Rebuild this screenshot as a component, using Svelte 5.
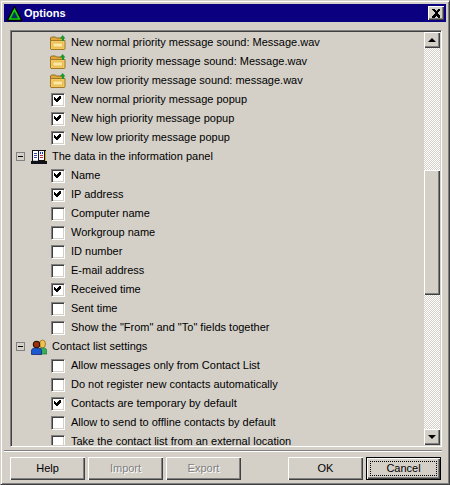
<script>
  const r1 = [
    { t: 'folder', l: 'New normal priority message sound: Message.wav' },
    { t: 'folder', l: 'New high priority message sound: Message.wav' },
    { t: 'folder', l: 'New low priority message sound: message.wav' },
    { t: 'on', l: 'New normal priority message popup' },
    { t: 'on', l: 'New high priority message popup' },
    { t: 'on', l: 'New low priority message popup' },
    { t: 'group', i: 'book', l: 'The data in the information panel' },
    { t: 'on', l: 'Name' },
    { t: 'on', l: 'IP address' },
    { t: 'off', l: 'Computer name' },
    { t: 'off', l: 'Workgroup name' },
    { t: 'off', l: 'ID number' },
    { t: 'off', l: 'E-mail address' },
    { t: 'on', l: 'Received time' },
    { t: 'off', l: 'Sent time' },
    { t: 'off', l: 'Show the "From" and "To" fields together' },
    { t: 'group', i: 'people', l: 'Contact list settings' },
    { t: 'off', l: 'Allow messages only from Contact List' },
    { t: 'off', l: 'Do not register new contacts automatically' },
    { t: 'on', l: 'Contacts are temporary by default' },
    { t: 'off', l: 'Allow to send to offline contacts by default' },
    { t: 'off', l: 'Take the contact list from an external location' }
  ];
</script>

<div class="win">
  <div class="title">
    <svg class="logo" width="17" height="17" viewBox="0 0 17 17">
      <path d="M8.500 1.500 L15.800 15.500 H1.200 Z" fill="#10d010" stroke="#000" stroke-width="1.300" stroke-linejoin="round" />
      <path d="M8.500 7 L11.500 13 H5.500 Z" fill="#082878" stroke="#064020" stroke-width=".6" />
    </svg>
    <span>Options</span>
    <div class="close">
      <svg width="10" height="9" viewBox="0 0 10 9" shape-rendering="crispEdges">
        <path d="M1 0h2l2 2 2-2h2v1L6 4l3 3v2H7L5 7 3 9H1V7l3-3-3-3z" fill="#000" />
      </svg>
    </div>
  </div>

  <div class="body">
    <div class="frame">
      <div class="tree">
        {#each r1 as r}
          {#if r.t === 'group'}
            <div class="row group">
              <span class="tog"><i></i></span>
              {#if r.i === 'book'}
                <svg class="gi" width="16" height="16" viewBox="0 0 16 16" shape-rendering="crispEdges">
                  <path d="M0 12h16v3H0z" fill="#101018" />
                  <path d="M1 1h14v12H1z" fill="#101018" />
                  <path d="M2 2h5v9H2z" fill="#fff" />
                  <path d="M2 11h5v1H2z" fill="#c8c8c8" />
                  <path d="M8 2h5v9H8z" fill="#f4f4ff" />
                  <path d="M3 4h3v1H3zM3 6h3v1H3zM3 8h3v1H3z" fill="#3848a8" />
                  <path d="M9 3h1v2H9zM11 3h1v2h-1z" fill="#1030c0" />
                  <path d="M9 6h3v1H9zM9 8h3v1H9z" fill="#c03030" />
                  <path d="M14 2h1v10h-1z" fill="#d8b000" />
                </svg>
              {:else}
                <svg class="gi" width="16" height="16" viewBox="0 0 16 16">
                  <ellipse cx="11.500" cy="5" rx="3" ry="4" fill="#f0c050" stroke="#907018" stroke-width=".8" />
                  <path d="M7 15v-3q0-3 4.500-3t4.500 3v3z" fill="#38b058" stroke="#106030" stroke-width=".6" />
                  <circle cx="5.500" cy="5.500" r="3.200" fill="#a03008" stroke="#201000" stroke-width="1.100" />
                  <path d="M0.500 15.500v-4q0-2.500 5-2.500t5 2.500v4z" fill="#1c58d0" stroke="#0a1860" stroke-width=".7" />
                </svg>
              {/if}
              <span class="lab">{r.l}</span>
            </div>
          {:else}
            <div class="row child">
              {#if r.t === 'folder'}
                <svg class="ic" width="16" height="15" viewBox="0 0 16 15">
                  <path d="M.5 6v-3l1-1h4l1 1h7v3z" fill="#e0a838" stroke="#906c20" />
                  <path d="M.5 5.500h14.500v8.500l-.5.500H1l-.5-.5z" fill="#f4c860" stroke="#a07a28" />
                  <path d="M3 8h9.500v4H3z" fill="#fce8a0" stroke="#d8a840" stroke-width=".6" />
                  <path d="M12 6V3.500H10L12.500 0 15.500 3.500H14V6z" fill="#189830" />
                </svg>
              {:else}
                <span class="cb">
                  {#if r.t === 'on'}
                    <svg width="10" height="10" viewBox="0 0 10 10" shape-rendering="crispEdges">
                      <path d="M8 2h1v3H8v1H7v1H6v1H4V7H3V6H2V3h1v1h1v1h1V4h1V3h1V2h1z" fill="#000" />
                    </svg>
                  {/if}
                </span>
              {/if}
              <span class="lab">{r.l}</span>
            </div>
          {/if}
        {/each}
      </div>
      <div class="sb">
        <div class="sbtn"><b class="up"></b></div>
        <div class="track"><div class="thumb"></div></div>
        <div class="sbtn"><b class="down"></b></div>
      </div>
    </div>

    <div class="sep"></div>

    <div class="btns">
      <button>Help</button>
      <button disabled>Import</button>
      <button disabled>Export</button>
      <span class="gap"></span>
      <button>OK</button>
      <button class="def"><span>Cancel</span></button>
    </div>
  </div>
</div>

<style>
  :global(body) { margin: 0; background: #d4d0c8; }
  .win {
    box-sizing: border-box;
    width: 450px;
    height: 485px;
    background: #d4d0c8;
    border: 1px solid;
    border-color: #d4d0c8 #404040 #404040 #d4d0c8;
    box-shadow: inset 1px 1px 0 #fff, inset -1px -1px 0 #808080;
    padding: 3px;
    display: flex;
    flex-direction: column;
    font: 11px/13px "Liberation Sans", Arial, sans-serif;
    color: #000;
  }
  .title {
    height: 18px;
    flex: none;
    background: #0a0080;
    color: #fff;
    display: flex;
    align-items: center;
    font-weight: 700;
    padding: 0 2px;
  }
  .logo { margin-right: 1px; flex: none; }
  .close {
    margin-left: auto;
    box-sizing: border-box;
    width: 16px;
    height: 14px;
    background: #d4d0c8;
    box-shadow: inset 1px 1px 0 #fff, inset -1px -1px 0 #404040, inset -2px -2px 0 #808080;
    display: flex;
    align-items: center;
    justify-content: center;
  }
  .body {
    flex: 1;
    min-height: 0;
    display: flex;
    flex-direction: column;
    padding: 8px 4px 4px 6px;
  }
  .frame {
    box-sizing: border-box;
    height: 417px;
    flex: none;
    display: flex;
    border: 1px solid;
    border-color: #808080 #fff #fff #808080;
    box-shadow: inset 1px 1px 0 #404040, inset -1px -1px 0 #d4d0c8;
    padding: 1px;
    overflow: hidden;
  }
  .tree {
    flex: 1;
    min-width: 0;
    overflow: hidden;
    padding-top: 1px;
  }
  .row {
    height: 19px;
    display: flex;
    align-items: center;
    white-space: nowrap;
  }
  .lab { padding-bottom: 1px; }
  .child { padding-left: 39px; }
  .group { padding-left: 4px; }
  .ic { margin: 0 5px 0 -1px; flex: none; }
  .cb {
    box-sizing: border-box;
    width: 14px;
    height: 14px;
    margin-right: 6px;
    flex: none;
    background: #fff;
    border: 1px solid;
    border-color: #808080 #fff #fff #808080;
    box-shadow: inset 1px 1px 0 #404040, inset -1px -1px 0 #d4d0c8;
    display: flex;
    padding: 1px;
  }
  .cb svg { margin: -1px; }
  .tog {
    box-sizing: border-box;
    width: 9px;
    height: 9px;
    border: 1px solid #808080;
    margin-right: 6px;
    flex: none;
    display: flex;
    align-items: center;
    justify-content: center;
  }
  .tog i { display: block; width: 5px; height: 1px; background: #000; }
  .gi { margin-right: 5px; flex: none; }
  .sb {
    width: 16px;
    flex: none;
    display: flex;
    flex-direction: column;
  }
  .sbtn {
    box-sizing: border-box;
    height: 16px;
    flex: none;
    background: #d4d0c8;
    box-shadow: inset 1px 1px 0 #fff, inset -1px -1px 0 #404040, inset -2px -2px 0 #808080;
    display: flex;
    align-items: center;
    justify-content: center;
  }
  .sbtn b { width: 0; height: 0; border-left: 4px solid transparent; border-right: 4px solid transparent; }
  .up { border-bottom: 4px solid #000; }
  .down { border-top: 4px solid #000; }
  .track {
    flex: 1;
    min-height: 0;
    background-image: conic-gradient(#d4d0c8 25%, #fff 0 50%, #d4d0c8 0 75%, #fff 0);
    background-size: 2px 2px;
  }
  .thumb {
    box-sizing: border-box;
    margin-top: 122px;
    height: 125px;
    background: #d4d0c8;
    box-shadow: inset 1px 1px 0 #fff, inset -1px -1px 0 #404040, inset -2px -2px 0 #808080;
  }
  .sep {
    height: 2px;
    flex: none;
    margin: 3px 0 0 -6px;
    background: linear-gradient(#808080 50%, #fff 50%);
  }
  .btns {
    display: flex;
    gap: 3px;
    margin-top: 5px;
  }
  .gap { width: 41px; flex: none; }
  button {
    box-sizing: border-box;
    width: 75px;
    height: 23px;
    padding: 0;
    border: 0;
    background: #d4d0c8;
    font: inherit;
    color: #000;
    box-shadow: inset 1px 1px 0 #fff, inset -1px -1px 0 #404040, inset -2px -2px 0 #808080;
  }
  button:disabled { color: #808080; text-shadow: 1px 1px 0 #fff; }
  .def {
    border: 1px solid #000;
    padding: 3px;
    display: flex;
  }
  .def span {
    flex: 1;
    border: 1px dotted #000;
    display: flex;
    align-items: center;
    justify-content: center;
  }
</style>
